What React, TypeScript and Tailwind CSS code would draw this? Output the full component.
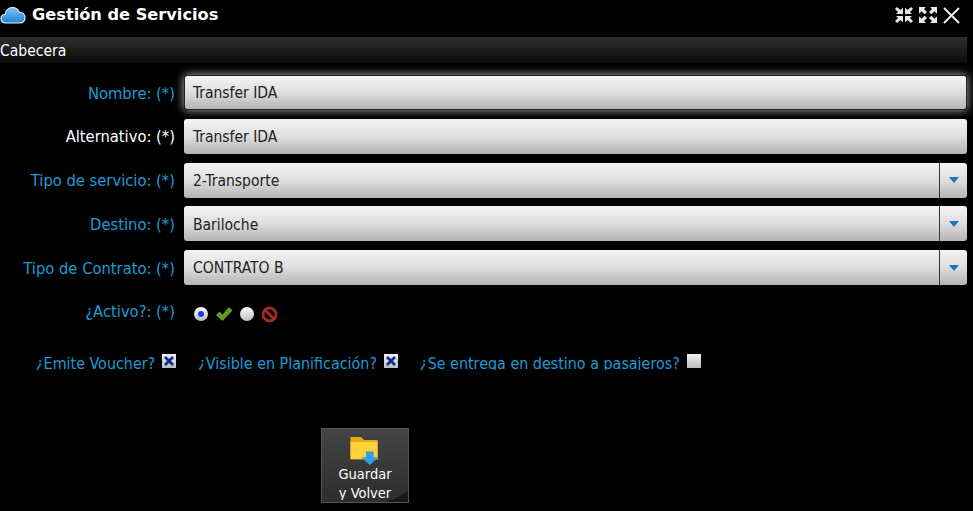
const fontClass = "font-['DejaVu_Sans_Condensed','DejaVu_Sans',sans-serif]";

const fieldBg = 'bg-gradient-to-b from-[#f4f4f4] via-[#dedede] to-[#b4b4b4]';

function CloudIcon() {
  return (
    <svg width="26" height="18" viewBox="0 0 26 18" className="shrink-0">
      <defs>
        <linearGradient id="cloud" x1="0" y1="0" x2="0" y2="1">
          <stop offset="0" stopColor="#7cc4f5" />
          <stop offset="1" stopColor="#1f7fd6" />
        </linearGradient>
      </defs>
      <path
        d="M6 17C2.800 17 1 15 1 12.600C1 10.200 2.800 8.600 5 8.500C5.600 4.400 8.600 1.500 12.400 1.500C15.600 1.500 18 3.300 19 6C22.600 6 25 8.400 25 11.500C25 14.800 22.800 17 19.500 17Z"
        fill="url(#cloud)"
        stroke="#e8f3fb"
        strokeWidth="1.200"
      />
    </svg>
  );
}

function ShrinkIcon() {
  return (
    <svg width="18" height="16" viewBox="0 0 18 16" fill="#e6e6e6">
      <path d="M2 0L0 2L3 5L1 7H8V0.500L5.500 3Z" />
      <path d="M16 0L18 2L15 5L17 7H10V0.500L12.500 3Z" />
      <path d="M2 16L0 14L3 11L1 9H8V15.500L5.500 13Z" />
      <path d="M16 16L18 14L15 11L17 9H10V15.500L12.500 13Z" />
    </svg>
  );
}

function ExpandIcon() {
  return (
    <svg width="18" height="16" viewBox="0 0 18 16" fill="#e6e6e6">
      <path d="M0 0H7L5 2L8 5L5.500 7.300L2.500 4.300L0 6.800Z" />
      <path d="M18 0H11L13 2L10 5L12.500 7.300L15.500 4.300L18 6.800Z" />
      <path d="M0 16H7L5 14L8 11L5.500 8.700L2.500 11.700L0 9.200Z" />
      <path d="M18 16H11L13 14L10 11L12.500 8.700L15.500 11.700L18 9.200Z" />
    </svg>
  );
}

function CloseIcon() {
  return (
    <svg width="17" height="17" viewBox="0 0 17 17" stroke="#ececec" strokeWidth="2" fill="none">
      <path d="M1 1L16 16M16 1L1 16" />
    </svg>
  );
}

function Label({ text, active }: { text: string; active?: boolean }) {
  return (
    <div
      className={`w-[175px] shrink-0 pt-[2px] text-right text-[16.4px] leading-[20px] ${
        active ? 'text-white' : 'text-[#1c9bd6]'
      }`}
    >
      {text}
    </div>
  );
}

function TextRow({ label, value, active, focused }: { label: string; value: string; active?: boolean; focused?: boolean }) {
  return (
    <div className="flex items-center gap-[9px] h-[35px]">
      <Label text={label} active={active} />
      <div
        className={`w-[783px] h-[35px] flex items-center pt-[3px] rounded-[3px] text-[15.5px] text-[#222] ${fieldBg} ${
          focused ? 'pl-[8px] border border-[#222] shadow-[0_0_10px_rgba(255,255,255,0.7)]' : 'pl-[9px]'
        }`}
      >
        {value}
      </div>
    </div>
  );
}

function SelectRow({ label, value }: { label: string; value: string }) {
  return (
    <div className="flex items-center gap-[9px] h-[35px]">
      <Label text={label} />
      <div className={`w-[783px] h-[35px] flex rounded-[3px] text-[15.5px] text-[#222] ${fieldBg}`}>
        <div className="flex-1 flex items-center pl-[9px] pt-[3px] border-r border-[#333]">{value}</div>
        <div className="w-[27px] flex items-center justify-center">
          <div className="w-0 h-0 border-l-[5px] border-r-[5px] border-t-[6px] border-l-transparent border-r-transparent border-t-[#1b74c4]" />
        </div>
      </div>
    </div>
  );
}

function Radio({ checked }: { checked?: boolean }) {
  return (
    <div className="w-[14px] h-[14px] rounded-full bg-gradient-to-b from-white to-[#bdbdbd] flex items-center justify-center">
      {checked && <div className="w-[6px] h-[6px] rounded-full bg-[#1340e8]" />}
    </div>
  );
}

function CheckBox({ checked }: { checked?: boolean }) {
  return (
    <div className="w-[14px] h-[14px] bg-gradient-to-b from-[#f2f2f2] to-[#bcbcbc] flex items-center justify-center">
      {checked && (
        <svg width="10" height="10" viewBox="0 0 10 10" stroke="#0c2a9c" strokeWidth="2.600" fill="none">
          <path d="M1 1L9 9M9 1L1 9" />
        </svg>
      )}
    </div>
  );
}

function CheckField({ label, checked }: { label: string; checked?: boolean }) {
  return (
    <div className="flex items-start gap-[7px] h-[16px] overflow-hidden">
      <span className="text-[15.93px] leading-[20px] text-[#1c9bd6]">{label}</span>
      <CheckBox checked={checked} />
    </div>
  );
}

export default function App() {
  return (
    <div className={`w-[973px] h-[511px] overflow-hidden bg-black text-white ${fontClass}`}>
      {/* Title bar */}
      <div className="h-[37px] flex items-center justify-between pr-[13px]">
        <div className="flex items-center gap-[6px] pb-[6px]">
          <CloudIcon />
          <span className="text-[16.2px] font-bold font-['DejaVu_Sans',sans-serif]">Gestión de Servicios</span>
        </div>
        <div className="flex items-center gap-[6px] pb-[7px]">
          <ShrinkIcon />
          <ExpandIcon />
          <CloseIcon />
        </div>
      </div>

      {/* Section header */}
      <div className="h-[26px] w-[967px] flex items-center pt-[3px] text-[15.5px] bg-gradient-to-b from-[#303030] to-[#0a0a0a]">Cabecera</div>

      {/* Form */}
      <div className="flex flex-col gap-[8.75px] mt-[12px]">
        <TextRow label="Nombre: (*)" value="Transfer IDA" focused />
        <TextRow label="Alternativo: (*)" value="Transfer IDA" active />
        <SelectRow label="Tipo de servicio: (*)" value="2-Transporte" />
        <SelectRow label="Destino: (*)" value="Bariloche" />
        <SelectRow label="Tipo de Contrato: (*)" value="CONTRATO B" />
      </div>

      <div className="flex items-center gap-[9px] mt-[16px] h-[20px]">
        <Label text="¿Activo?: (*)" />
        <div className="flex items-center gap-[7px] ml-[10px] mt-[6px]">
          <Radio checked />
          <svg width="18" height="16" viewBox="0 0 18 16">
            <path d="M1 9L4.500 5.500L7.500 8.500L14 1L17.500 4.500L7.500 15Z" fill="#5f9e1e" />
          </svg>
          <Radio />
          <svg width="17" height="17" viewBox="0 0 17 17" fill="none" stroke="#a52a22" strokeWidth="2.800">
            <circle cx="8.500" cy="8.500" r="6.500" />
            <path d="M4 4L13 13" />
          </svg>
        </div>
      </div>

      <div className="flex gap-[22px] pl-[36px] mt-[33px]">
        <CheckField label="¿Emite Voucher?" checked />
        <CheckField label="¿Visible en Planificación?" checked />
        <CheckField label="¿Se entrega en destino a pasajeros?" />
      </div>

      {/* Save button */}
      <div className="pl-[321px] mt-[58px]">
        <button className="relative w-[88px] h-[75px] overflow-hidden border border-[#555] bg-gradient-to-b from-[#333] to-[#161616]">
          <div className="absolute -left-[70px] -top-[50px] w-[180px] h-[125px] rounded-full bg-gradient-to-b from-[#555] to-[#2c2c2c]" />
          <div className="relative h-[69px] overflow-hidden flex flex-col items-center pt-[6px] text-[14.5px] leading-[19px] text-white">
            <svg width="30" height="28" viewBox="0 0 30 29" className="shrink-0">
              <path d="M0 0H11L14 3H28V23H0Z" fill="#e8a712" />
              <path d="M0 5H28V23H0Z" fill="#ffd23c" />
              <path d="M16 15H24V21H29L20 29L11 21H16Z" fill="#2f9fe8" />
            </svg>
            <span>Guardar</span>
            <span>y Volver</span>
          </div>
        </button>
      </div>
    </div>
  );
}
